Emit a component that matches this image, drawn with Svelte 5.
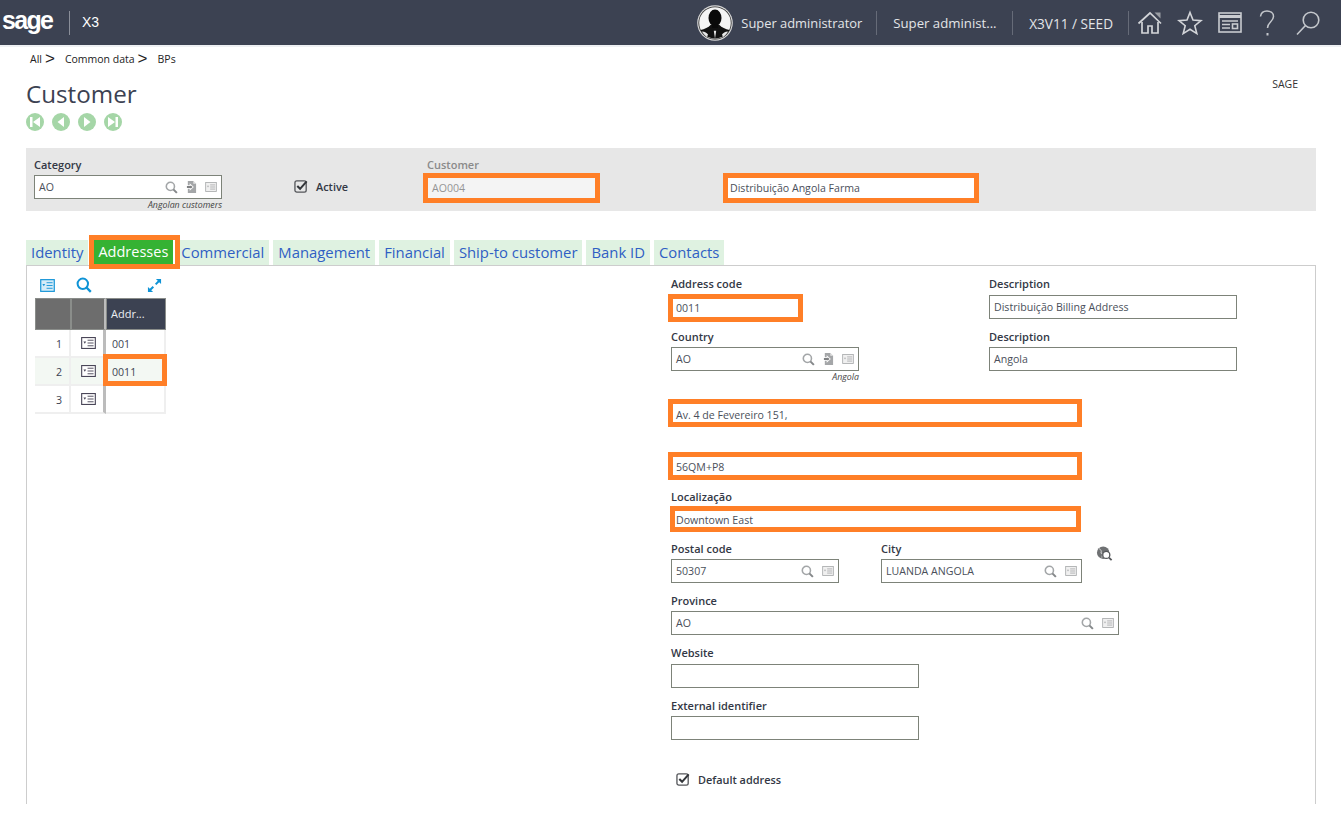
<script>
  const tabs = ['Identity', 'Addresses', 'Commercial', 'Management', 'Financial', 'Ship-to customer', 'Bank ID', 'Contacts'];
  const rows = [
    { n: 1, code: '001' },
    { n: 2, code: '0011', active: true },
    { n: 3, code: '' }
  ];
</script>

{#snippet search()}
  <svg class="ico" viewBox="0 0 14 14" width="13" height="13"><circle cx="5.800" cy="5.800" r="4.400" fill="none" stroke="#a3a6a8" stroke-width="1.700"/><path d="M9 9l3.800 3.800" stroke="#85888a" stroke-width="2.200"/></svg>
{/snippet}
{#snippet jump()}
  <svg class="ico" viewBox="0 0 12 13" width="11" height="12"><path d="M2 0h6l3 3v10H2z" fill="#a4a6a8"/><path d="M8 0l3 3H8z" fill="#e8e8e8"/><path d="M0 4.500h4V2.500l4.500 4L4 10.500v-2H0z" fill="#fff"/><path d="M1 5.500h4V4.600l2.200 1.900L5 8.400V7.500H1z" fill="#7f8183"/></svg>
{/snippet}
{#snippet card()}
  <svg class="ico" viewBox="0 0 14 12" width="12" height="10"><rect x=".6" y=".6" width="12.800" height="10.800" fill="#f0f0f0" stroke="#a8aaac"/><path d="M6 3.500h6M6 6h6M6 8.500h6" stroke="#a8aaac"/><path d="M2.200 4.600h2.400L3.400 6.600z" fill="#a8aaac"/></svg>
{/snippet}
{#snippet listIcon()}
  <svg viewBox="0 0 16 14" width="15" height="13"><rect x=".7" y=".7" width="14.600" height="12.600" fill="#d5ecf8" stroke="#1a96d8" stroke-width="1.300"/><path d="M7 4h6.500M7 7h6.500M7 10h6.500" stroke="#1a96d8"/><path d="M2.500 5.500h3L4 7.800z" fill="#1a96d8"/></svg>
{/snippet}
{#snippet tableCard()}
  <svg viewBox="0 0 16 13" width="15" height="12"><rect x=".6" y=".6" width="14.800" height="11.800" fill="#fff" stroke="#4a4658" stroke-width="1.200"/><path d="M7 3.500h6.500M7 6.500h6.500M7 9.500h6.500" stroke="#4a4658"/><path d="M2.500 5h3L4 7.200z" fill="#4a4658"/></svg>
{/snippet}
{#snippet tick()}
  <svg viewBox="0 0 16 16" width="15" height="15"><rect x="1" y="2" width="12" height="12" rx="2" fill="none" stroke="#54565a" stroke-width="1.400"/><path d="M3.500 7.500l3 3L13.500 2.500" fill="none" stroke="#33363a" stroke-width="2.200"/></svg>
{/snippet}

<header class="topbar">
  <div class="brand">
    <span class="logo">sage</span>
    <span class="product">X3</span>
  </div>
  <div class="session">
    <svg class="avatar" viewBox="0 0 36 36" width="36" height="36">
      <circle cx="18" cy="18" r="17.800" fill="#d8d8d8"/>
      <circle cx="18" cy="18" r="16.600" fill="#2a2a2a"/>
      <circle cx="18" cy="18" r="15.800" fill="#f4f4f4"/>
      <path d="M3.500 25c4-1 8-2.500 10-5h9c2 2.500 6 4 10 5-2.500 4.500-8 8.500-14.500 8.500S6 29.500 3.500 25z" fill="#111"/>
      <path d="M18 33.800l-1.200-8h2.400l-1.200 8zM5 26.500c3 0 5 1.500 6 3l-1 2.500c-2-1.500-4-3.500-5-5.500zM31 26.500c-3 0-5 1.500-6 3l1 2.500c2-1.500 4-3.500 5-5.500z" fill="#e8e8e8"/>
      <ellipse cx="18" cy="13" rx="6.500" ry="8.500" fill="#0a0a0a"/>
      <path d="M15 18h6v5h-6z" fill="#0a0a0a"/>
    </svg>
    <span class="user">Super administrator</span>
    <span class="sep"></span>
    <span class="role">Super administ...</span>
    <span class="sep"></span>
    <span class="folder">X3V11 / SEED</span>
    <span class="sep short"></span>
    <div class="tools">
      <svg viewBox="0 0 26 26" width="26" height="26" fill="none" stroke="#d3d5d9" stroke-width="1.700">
        <path d="M1.500 13.500L13 3l11 10.500"/><path d="M5 12v11h6v-7h4v7h6V12"/><path d="M17.500 2.500h6v6z" fill="#9a9da3" stroke="none"/>
      </svg>
      <svg viewBox="0 0 26 26" width="26" height="26" fill="none" stroke="#d3d5d9" stroke-width="1.600">
        <path d="M13 2.500l3 7.600 8 .5-6.200 5.100 2 7.900L13 19.300l-6.800 4.300 2-7.900L2 10.600l8-.5z"/>
      </svg>
      <svg viewBox="0 0 26 26" width="26" height="26" fill="none" stroke="#c9cbd0" stroke-width="1.600">
        <rect x="2" y="3" width="22" height="19"/><path d="M2 6.500h22" stroke-width="3"/><path d="M5 11h16M5 14.500h8M5 18h8"/><rect x="15.500" y="14" width="5" height="4.500"/>
      </svg>
      <svg viewBox="0 0 20 28" width="20" height="28" fill="none" stroke="#c4c7cc" stroke-width="1.500">
        <path d="M3.500 7.500C4 3.500 7 2 10 2c3.500 0 6.500 2 6.500 5.500 0 5-6 5.500-6 11.500"/><path d="M10.500 24v2.500" stroke-width="2"/>
      </svg>
      <svg class="find" viewBox="0 0 26 26" width="26" height="26" fill="none" stroke="#c4c7cc" stroke-width="1.600">
        <circle cx="16" cy="10" r="7.800"/><path d="M10.500 15.500L2 24.500"/>
      </svg>
    </div>
  </div>
</header>

<main class="page">
  <nav class="crumbs">
    <span>All</span><b>&gt;</b><span>Common data</span><b>&gt;</b><span>BPs</span>
  </nav>

  <div class="title-row">
    <h1>Customer</h1>
    <span class="company">SAGE</span>
  </div>
  <div class="pager">
    <svg viewBox="0 0 18 18" width="18" height="18"><circle cx="9" cy="9" r="9"/><path d="M4 4h2.500v10H4zM14 4v10L7 9z"/></svg>
    <svg viewBox="0 0 18 18" width="18" height="18"><circle cx="9" cy="9" r="9"/><path d="M12 4v10L5.500 9z"/></svg>
    <svg viewBox="0 0 18 18" width="18" height="18"><circle cx="9" cy="9" r="9"/><path d="M6 4v10l6.500-5z"/></svg>
    <svg viewBox="0 0 18 18" width="18" height="18"><circle cx="9" cy="9" r="9"/><path d="M14 4h-2.500v10H14zM4 4v10l7-5z"/></svg>
  </div>

  <section class="band">
    <div class="band-cat">
      <span class="lab">Category</span>
      <div class="input w188"><span>AO</span><i>{@render search()}{@render jump()}{@render card()}</i></div>
      <em class="hint">Angolan customers</em>
    </div>
    <label class="check band-active">
      {@render tick()}
      Active
    </label>
    <div class="band-cust">
      <span class="lab muted">Customer</span>
      <div class="input mark disabled cust"><span>AO004</span></div>
    </div>
    <div class="band-name">
      <div class="input mark name"><span>Distribuição Angola Farma</span></div>
    </div>
  </section>

  <div class="tabs">
    {#each tabs as tab}
      <span class="tab" class:on={tab === 'Addresses'}>{tab}</span>
    {/each}
  </div>

  <section class="panel">
    <div class="list">
      <div class="list-tools">
        {@render listIcon()}
        <svg viewBox="0 0 16 16" width="16" height="16" fill="none" stroke="#0e93d6"><circle cx="6.800" cy="6.800" r="5.200" stroke-width="2"/><path d="M10.500 10.500l4.300 4.300" stroke-width="2.400"/></svg>
        <svg class="expand" viewBox="0 0 16 16" width="15" height="15" fill="#0e93d6"><path d="M9.500 1H15v5.500l-2-2-3 3L8.500 6l3-3zM6.500 15H1V9.500l2 2 3-3L7.500 10l-3 3z"/></svg>
      </div>
      <div class="grid">
        <div class="th gray"></div><div class="th gray second"></div><div class="th dark">Addr...</div>
        {#each rows as row}
          <div class="td num" class:alt={row.active}>{row.n}</div>
          <div class="td act" class:alt={row.active}>{@render tableCard()}</div>
          <div class="td code" class:alt={row.active} class:picked={row.active}>{row.code}</div>
        {/each}
      </div>
    </div>

    <div class="form">
      <div class="row r-first">
        <div class="f"><span class="lab">Address code</span><div class="input mark code-in"><span>0011</span></div></div>
        <div class="f desc"><span class="lab">Description</span><div class="input w248"><span>Distribuição Billing Address</span></div></div>
      </div>
      <div class="row r-country">
        <div class="f"><span class="lab">Country</span><div class="input w188"><span>AO</span><i>{@render search()}{@render jump()}{@render card()}</i></div><em class="hint">Angola</em></div>
        <div class="f desc2"><span class="lab">Description</span><div class="input w248"><span>Angola</span></div></div>
      </div>
      <div class="input mark long addr1"><span>Av. 4 de Fevereiro 151,</span></div>
      <div class="input mark long addr2"><span>56QM+P8</span></div>
      <div class="f loc"><span class="lab">Localização</span><div class="input mark thin"><span>Downtown East</span></div></div>
      <div class="row r-post">
        <div class="f"><span class="lab">Postal code</span><div class="input w168"><span>50307</span><i>{@render search()}{@render card()}</i></div></div>
        <div class="f city"><span class="lab">City</span><div class="input w201"><span>LUANDA ANGOLA</span><i>{@render search()}{@render card()}</i></div></div>
        <svg class="globe" viewBox="0 0 18 18" width="17" height="16"><circle cx="7.500" cy="7.500" r="7" fill="#6f7173"/><path d="M3 3c2 1 3 3 2 5 2 0 2 2 1 5" stroke="#e0e0e0" fill="none"/><circle cx="11" cy="10" r="4" fill="#fff" stroke="#55575a" stroke-width="1.500"/><path d="M14 13l3 3" stroke="#55575a" stroke-width="2"/></svg>
      </div>
      <div class="f next"><span class="lab">Province</span><div class="input w448"><span>AO</span><i>{@render search()}{@render card()}</i></div></div>
      <div class="f next"><span class="lab web">Website</span><div class="input w248"></div></div>
      <div class="f next"><span class="lab">External identifier</span><div class="input w248"></div></div>
      <label class="check default">
        {@render tick()}
        Default address
      </label>
    </div>
  </section>
</main>

<style>
  :global(body) {
    margin: 0;
    background: #fff;
    font-family: "Open Sans", "Noto Sans", sans-serif;
    color: #3c4252;
    overflow: hidden;
  }

  .topbar {
    height: 45px;
    background: #3c4252;
    border-bottom: 2px solid #eef0f3;
    display: flex;
    align-items: center;
    justify-content: space-between;
    color: #e3e5e8;
  }

  .brand {
    display: flex;
    align-items: center;
    height: 100%;
  }

  .logo {
    font-family: "Liberation Sans", sans-serif;
    font-weight: 700;
    font-size: 25px;
    letter-spacing: -1.700px;
    color: #fff;
    width: 66px;
    padding-left: 2px;
    box-sizing: border-box;
    padding-bottom: 4px;
  }

  .product {
    border-left: 1px solid #8a8e99;
    height: 24px;
    line-height: 22px;
    padding-left: 12px;
    margin-left: 3px;
    font-family: "Liberation Sans", sans-serif;
    font-size: 14px;
    color: #fff;
  }

  .session {
    display: flex;
    align-items: center;
    font-size: 12.900px;
    height: 100%;
  }

  .user, .role, .folder {
    white-space: nowrap;
    padding-top: 1px;
  }

  .avatar { margin-right: 8px; }

  .sep {
    width: 1px;
    height: 24px;
    background: #666b78;
    margin: 0 16px 0 14px;
  }

  .sep.short { margin: 0 8px 0 15px; }

  .role { width: 105px; font-size: 13.200px; }
  .folder { font-size: 13.600px; }

  .tools {
    display: flex;
    align-items: center;
    gap: 14px;
    padding-right: 20px;
  }

  .find { margin-left: 4px; }

  .page {
    padding: 4px 25px 0 26px;
  }

  .crumbs {
    display: flex;
    align-items: center;
    padding-left: 4px;
    height: 16px;
    font-size: 10.500px;
    color: #222;
  }

  .crumbs b {
    font-family: "Liberation Sans", sans-serif;
    font-weight: 400;
    font-size: 17px;
    margin: 0 10px 0 3px;
    line-height: 16px;
  }

  .title-row {
    display: flex;
    justify-content: space-between;
    align-items: flex-start;
    margin-top: 9px;
    height: 36px;
  }

  h1 {
    margin: 0;
    font-weight: 400;
    font-size: 24.200px;
    line-height: 36px;
    color: #3c4252;
  }

  .company {
    font-size: 10.500px;
    color: #333;
    margin: 1px 18px 0 0;
  }

  .pager {
    display: flex;
    gap: 8px;
    height: 18px;
    margin-top: 1px;
  }

  .pager svg { fill: #a5d6a7; }
  .pager path { fill: #fff; }

  .band {
    margin-top: 17px;
    height: 63px;
    background: #e7e7e7;
    display: flex;
  }

  .band-cat {
    margin: 10px 0 0 8px;
    width: 260px;
    flex: none;
  }

  .band-active {
    margin-top: 31px;
    width: 133px;
    flex: none;
    align-self: flex-start;
  }

  .band-cust {
    margin-top: 10px;
    width: 300px;
    flex: none;
  }

  .band-name { margin: 25px 0 0 0; }

  .lab {
    display: block;
    font-size: 11px;
    font-weight: 600;
    line-height: 14px;
    color: #333845;
    white-space: nowrap;
  }

  .lab.muted { color: #8a8a8a; }

  .input {
    box-sizing: border-box;
    height: 24px;
    border: 1px solid #7d8379;
    background: #fff;
    margin-top: 3px;
    padding: 0 4px;
    display: flex;
    align-items: center;
    justify-content: space-between;
    font-size: 10.600px;
    color: #4a4f5a;
    white-space: nowrap;
  }

  .input i {
    display: flex;
    align-items: center;
    gap: 8px;
    font-style: normal;
  }

  .ico { display: block; }

  .hint {
    display: block;
    font-size: 8.800px;
    line-height: 11px;
    text-align: right;
    color: #444;
    width: 188px;
    margin-top: 1px;
  }

  .w168 { width: 168px; }
  .w188 { width: 188px; }
  .w201 { width: 201px; }
  .w248 { width: 248px; }
  .w448 { width: 448px; }

  .mark {
    border: 5px solid #ff7f27;
    padding: 0 0 0 3px;
  }

  .band .cust {
    width: 177px;
    height: 30px;
    margin: 1px 0 0 -4px;
    padding-left: 4px;
    background: #f4f4f4;
    color: #959595;
  }

  .band .name {
    width: 256px;
    height: 30px;
    margin: 0 0 0 -4px;
    padding-left: 2px;
  }

  .check {
    display: flex;
    align-items: center;
    gap: 7px;
    font-size: 10.900px;
    font-weight: 600;
    color: #333845;
  }

  .tabs {
    display: flex;
    gap: 4px;
    margin-top: 29px;
    height: 25px;
  }

  .tab {
    display: block;
    background: #dff2e1;
    color: #2f5fc4;
    font-size: 14.850px;
    line-height: 25px;
    padding: 0 5px;
    white-space: nowrap;
  }

  .tab.on {
    position: relative;
    z-index: 1;
    background: #35b233;
    color: #fff;
    outline: 5px solid #ff7f27;
    margin: 0 -3px 0 2px;
    padding: 0 7px 0 4px;
    box-shadow: inset -2px 0 0 #fff;
    font-size: 14.500px;
    height: 24px;
    line-height: 24px;
  }

  .panel {
    border-top: 1px solid #cdcdcd;
    border-left: 1px solid #cdcdcd;
    border-right: 1px solid #cdcdcd;
    height: 539px;
    display: flex;
    box-sizing: border-box;
  }

  .list {
    width: 644px;
    flex: none;
    padding: 10px 0 0 8px;
    box-sizing: border-box;
  }

  .list-tools {
    display: flex;
    align-items: center;
    height: 18px;
    padding-left: 5px;
    gap: 21px;
    width: 131px;
    box-sizing: border-box;
  }

  .expand { margin-left: auto; margin-right: 4px; }

  .grid {
    display: grid;
    grid-template-columns: 36px 35px 60px;
    grid-template-rows: 32px repeat(3, 28px);
    width: 131px;
    margin-top: 4px;
  }

  .th {
    box-sizing: border-box;
    border: 1px solid #8a8d8a;
  }

  .gray { background: #6d6d6d; }
  .second { border-right: 2px solid #bcbcbc; }

  .dark {
    background: #3c4252;
    color: #eceef2;
    font-size: 11px;
    line-height: 30px;
    padding-left: 4px;
  }

  .td {
    box-sizing: border-box;
    border-right: 2px solid #efefef;
    border-bottom: 2px solid #efefef;
    font-size: 10.600px;
    display: flex;
    align-items: center;
    padding-top: 2px;
    color: #3c4252;
  }

  .num { justify-content: flex-end; padding-right: 7px; }
  .act { justify-content: center; padding: 0 0 0 2px; border-right: 3px solid #bcbcbc; }
  .code { padding-left: 6px; }

  .alt { background: #f3f8f3; }

  .picked { position: relative; }

  /* annotation frame sits over the cell and bleeds onto the row above */
  .picked::after {
    content: '';
    position: absolute;
    inset: -4px -3px -2px -3px;
    border: 5px solid #ff7f27;
  }

  .form {
    flex: 1;
    padding-top: 11px;
  }

  .row { display: flex; align-items: flex-start; }

  .r-first .input { margin-top: 4px; }
  .r-country { margin-top: 11px; }

  .desc { margin-left: 186px; }
  .desc2 { margin-left: 130px; }

  .r-first .code-in {
    width: 135px;
    height: 28px;
    margin: 3px 0 -3px -3px;
    padding-bottom: 1px;
  }

  .long {
    width: 414px;
    height: 28px;
    margin-left: -3px;
  }

  .addr1 { margin-top: 16px; padding-top: 3px; }
  .addr2 { margin-top: 25px; padding-top: 1px; }

  .loc { margin-top: 10px; }

  .thin {
    width: 411px;
    height: 26px;
    margin: 2px 0 0 -1px;
    padding: 1px 0 0 1px;
  }

  .r-post { margin-top: 10px; }
  .city { margin-left: 42px; }
  .globe { margin: 4px 0 0 14px; }

  .next { margin-top: 11px; }
  .web { margin-bottom: 4px; }

  .default {
    margin: 32px 0 0 5px;
  }
</style>
